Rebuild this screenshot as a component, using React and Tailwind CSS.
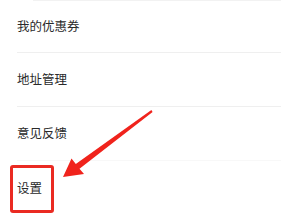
import React from 'react';

const items = ['我的优惠券', '地址管理', '意见反馈', '设置'];

const App = () => {
  return (
    <div
      className="relative w-[281px] h-[223px] bg-white overflow-hidden"
      style={{ fontFamily: '"Noto Sans CJK SC", "Noto Sans", sans-serif' }}
    >
      <div className="h-[1px] ml-[33px] bg-[#f2f2f2]"></div>
      {items.map((name, i) => (
        <div
          key={name}
          className={`flex items-center pl-[17px] ${i === 0 ? 'h-[52px]' : 'h-[54px]'}`}
        >
          <div
            className={`flex items-center h-full w-full text-[12.5px] text-[#2a2a2a] ${
              i < 2 ? 'border-b border-[#efefef]' : ''
            } ${i === 2 ? 'border-b border-[#f8f8f8]' : ''}`}
          >
            {name}
          </div>
        </div>
      ))}

      {/* highlight box */}
      <div className="absolute left-[10px] top-[165px] w-[44px] h-[48px] border-[3px] border-[#ea2a22] rounded-[3px]"></div>

      {/* arrow */}
      <svg className="absolute left-0 top-0" width="281" height="223" viewBox="0 0 281 223">
        <polygon
          fill="#f0231c"
          points="63,177 71.5,158.5 75.8,164 151.4,110 152.6,112 79.5,168.8 84,174"
        />
      </svg>
    </div>
  );
};

export default App;
